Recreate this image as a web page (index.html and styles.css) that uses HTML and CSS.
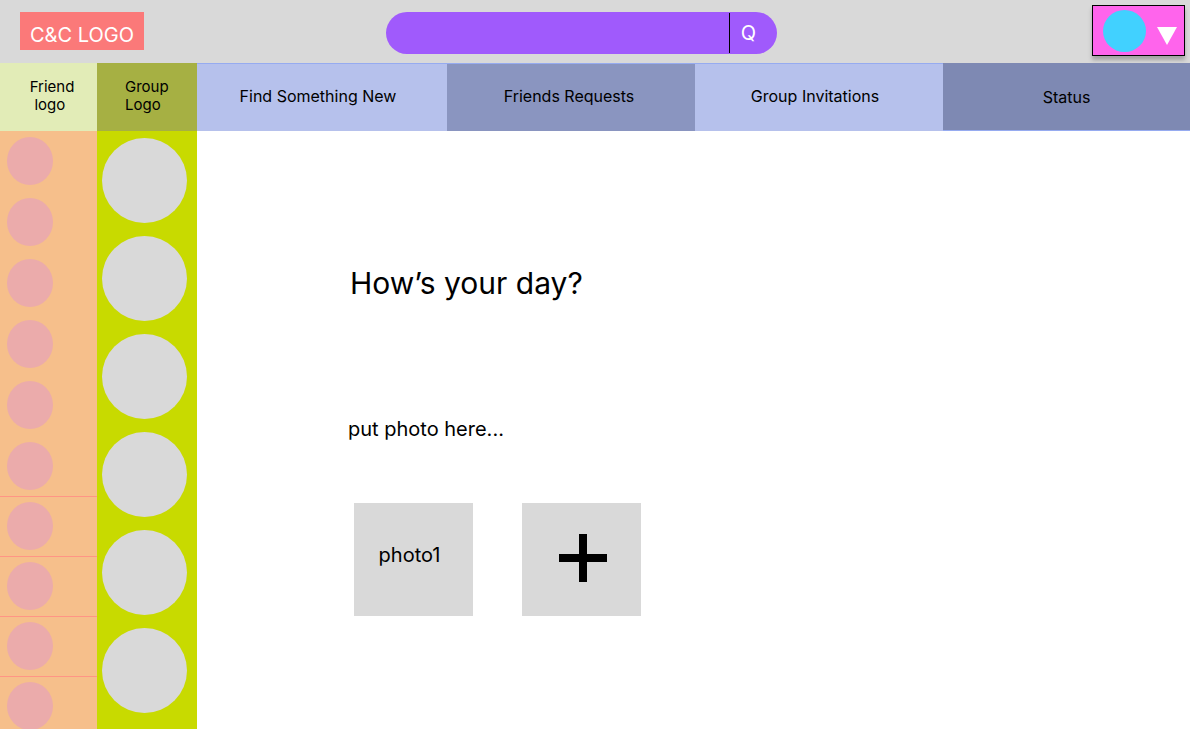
FILE: index.html
```html
<!DOCTYPE html>
<html lang="en">
<head>
<meta charset="utf-8">
<meta name="viewport" content="width=device-width, initial-scale=1">
<title>C&amp;C</title>
<link rel="stylesheet" href="styles.css">
</head>
<body>
<header class="topbar">
  <a class="logo" href="#">C&amp;C LOGO</a>
  <form class="search" role="search">
    <input class="search-input" type="search" aria-label="Search">
    <button class="search-button" type="submit" aria-label="Search">Q</button>
  </form>
  <button class="profile" type="button" aria-label="Profile menu">
    <span class="profile-avatar"></span>
    <svg class="profile-arrow" viewBox="0 0 20 18" aria-hidden="true"><path d="M0 0H20L10 18Z" fill="#fff"/></svg>
  </button>
</header>
<div class="layout">
  <aside class="column friends">
    <h2 class="column-title friends-title">Friend<br>logo&nbsp;</h2>
    <ul class="friend-list">
      <li class="friend"><a class="friend-avatar" href="#" aria-label="Friend 1"></a></li>
      <li class="friend"><a class="friend-avatar" href="#" aria-label="Friend 2"></a></li>
      <li class="friend"><a class="friend-avatar" href="#" aria-label="Friend 3"></a></li>
      <li class="friend"><a class="friend-avatar" href="#" aria-label="Friend 4"></a></li>
      <li class="friend"><a class="friend-avatar" href="#" aria-label="Friend 5"></a></li>
      <li class="friend ruled"><a class="friend-avatar" href="#" aria-label="Friend 6"></a></li>
      <li class="friend compact ruled"><a class="friend-avatar" href="#" aria-label="Friend 7"></a></li>
      <li class="friend compact ruled"><a class="friend-avatar" href="#" aria-label="Friend 8"></a></li>
      <li class="friend compact ruled"><a class="friend-avatar" href="#" aria-label="Friend 9"></a></li>
      <li class="friend compact"><a class="friend-avatar" href="#" aria-label="Friend 10"></a></li>
    </ul>
  </aside>
  <aside class="column groups">
    <h2 class="column-title groups-title">Group<br>Logo</h2>
    <ul class="group-list">
      <li><a class="group-avatar" href="#" aria-label="Group 1"></a></li>
      <li><a class="group-avatar" href="#" aria-label="Group 2"></a></li>
      <li><a class="group-avatar" href="#" aria-label="Group 3"></a></li>
      <li><a class="group-avatar" href="#" aria-label="Group 4"></a></li>
      <li><a class="group-avatar" href="#" aria-label="Group 5"></a></li>
      <li><a class="group-avatar" href="#" aria-label="Group 6"></a></li>
    </ul>
  </aside>
  <div class="content">
    <nav class="tabs">
      <a class="tab" href="#">Find Something New</a>
      <a class="tab tab-requests" href="#">Friends Requests</a>
      <a class="tab" href="#">Group Invitations</a>
      <a class="tab tab-status" href="#">Status</a>
    </nav>
    <main class="composer">
      <h1 class="prompt">How’s your day?</h1>
      <p class="hint">put photo here...</p>
      <div class="photos">
        <button class="photo" type="button">photo1</button>
        <button class="photo photo-add" type="button" aria-label="Add photo">
          <svg class="plus" viewBox="0 0 48 48" aria-hidden="true"><path d="M20 0H28V20H48V28H28V48H20V28H0V20H20Z"/></svg>
        </button>
      </div>
    </main>
  </div>
</div>
</body>
</html>
```

FILE: styles.css
```css
* {
  box-sizing: border-box;
}

body {
  display: flex;
  flex-direction: column;
  height: 100vh;
  margin: 0;
  background: #fff;
  color: #000;
  font-family: Inter, "Liberation Sans", sans-serif;
}

ul {
  margin: 0;
  padding: 0;
  list-style: none;
}

a {
  color: inherit;
  text-decoration: none;
}

button {
  padding: 0;
  border: 0;
  color: inherit;
  font: inherit;
  cursor: pointer;
}

/* Top bar */
.topbar {
  display: flex;
  flex: none;
  align-items: flex-start;
  padding: 5px 5px 7px 20px;
  background: #d9d9d9;
}

.logo {
  margin-top: 7px;
  padding: 11px 10px 3px;
  background: #fb7979;
  color: #fff;
  font-size: 20px;
  line-height: 24px;
  white-space: nowrap;
}

.search {
  display: flex;
  flex: 0 1 391px;
  height: 42px;
  margin: 7px 0 0 242px;
  overflow: hidden;
  border-radius: 21px;
  background: #a05afc;
}

.search-input {
  flex: 1;
  min-width: 0;
  padding: 0 20px;
  border: 0;
  outline: 0;
  background: transparent;
  color: #fff;
  font: inherit;
}

.search-button {
  width: 48px;
  margin: 1px 0;
  padding-right: 10px;
  border-left: 1px solid #000;
  background: transparent;
  color: #fff;
  font-size: 20px;
}

.profile {
  display: flex;
  align-items: center;
  gap: 11px;
  height: 51px;
  margin-left: auto;
  padding: 0 7px 0 10px;
  border: 1px solid #000;
  background: #ff64ec;
  box-shadow: 0 4px 4px rgba(0, 0, 0, 0.25);
}

.profile-avatar {
  width: 43px;
  height: 42px;
  border-radius: 50%;
  background: #41d1ff;
}

.profile-arrow {
  width: 20px;
  height: 18px;
  margin-top: 11px;
}

/* Columns */
.layout {
  display: flex;
  flex: 1;
  min-height: 0;
}

.column {
  flex: none;
  overflow: hidden;
}

.column-title {
  height: 68px;
  margin: 0;
  padding-top: 15px;
  font-size: 15px;
  font-weight: 400;
  line-height: 18px;
}

.friends {
  width: 97px;
  background: #f6bf8b;
}

.friends-title {
  padding-left: 7px;
  background: #e2ecb7;
  text-align: center;
}

.friend {
  height: 61px;
  padding: 6px 7px 0;
}

.compact {
  height: 60px;
  padding-top: 5px;
}

.ruled {
  border-bottom: 1px solid #ff9585;
}

.friend-avatar {
  display: block;
  width: 46px;
  height: 48px;
  border-radius: 50%;
  background: #ebabab;
}

.groups {
  width: 100px;
  background: #c8da00;
}

.groups-title {
  padding-left: 28px;
  background: #a6b043;
}

.group-list {
  display: flex;
  flex-direction: column;
  gap: 13px;
  padding: 7px 5px 0;
}

.group-avatar {
  display: block;
  width: 85px;
  height: 85px;
  border-radius: 50%;
  background: #d9d9d9;
}

/* Content */
.content {
  flex: 1;
  min-width: 0;
}

.tabs {
  display: grid;
  grid-template-columns: 250fr 248fr 248fr 247fr;
  height: 68px;
}

.tab {
  display: flex;
  align-items: center;
  justify-content: center;
  padding: 0 8px 3px 0;
  border-top: 1px solid #96abf0;
  background: #b6c1ec;
  font-size: 16px;
}

.tab-requests {
  padding-right: 4px;
  background: #8a95c0;
}

.tab-status {
  padding: 0;
  border-top: 0;
  border-bottom: 1px solid #96abf0;
  background: #7e89b3;
}

.composer {
  padding: 134px 20px 20px 151px;
}

.prompt {
  margin: 0;
  padding-left: 2px;
  font-size: 30px;
  font-weight: 400;
  line-height: 36px;
}

.hint {
  margin: 116px 0 0;
  font-size: 20px;
  line-height: 24px;
}

.photos {
  display: flex;
  gap: 49px;
  margin-top: 62px;
  padding-left: 6px;
}

.photo {
  display: flex;
  align-items: center;
  justify-content: center;
  width: 119px;
  height: 113px;
  padding: 0 8px 10px 0;
  background: #d9d9d9;
  font-size: 20px;
}

.photo-add {
  padding: 0 0 3px 3px;
}

.plus {
  width: 48px;
  height: 48px;
}
```
